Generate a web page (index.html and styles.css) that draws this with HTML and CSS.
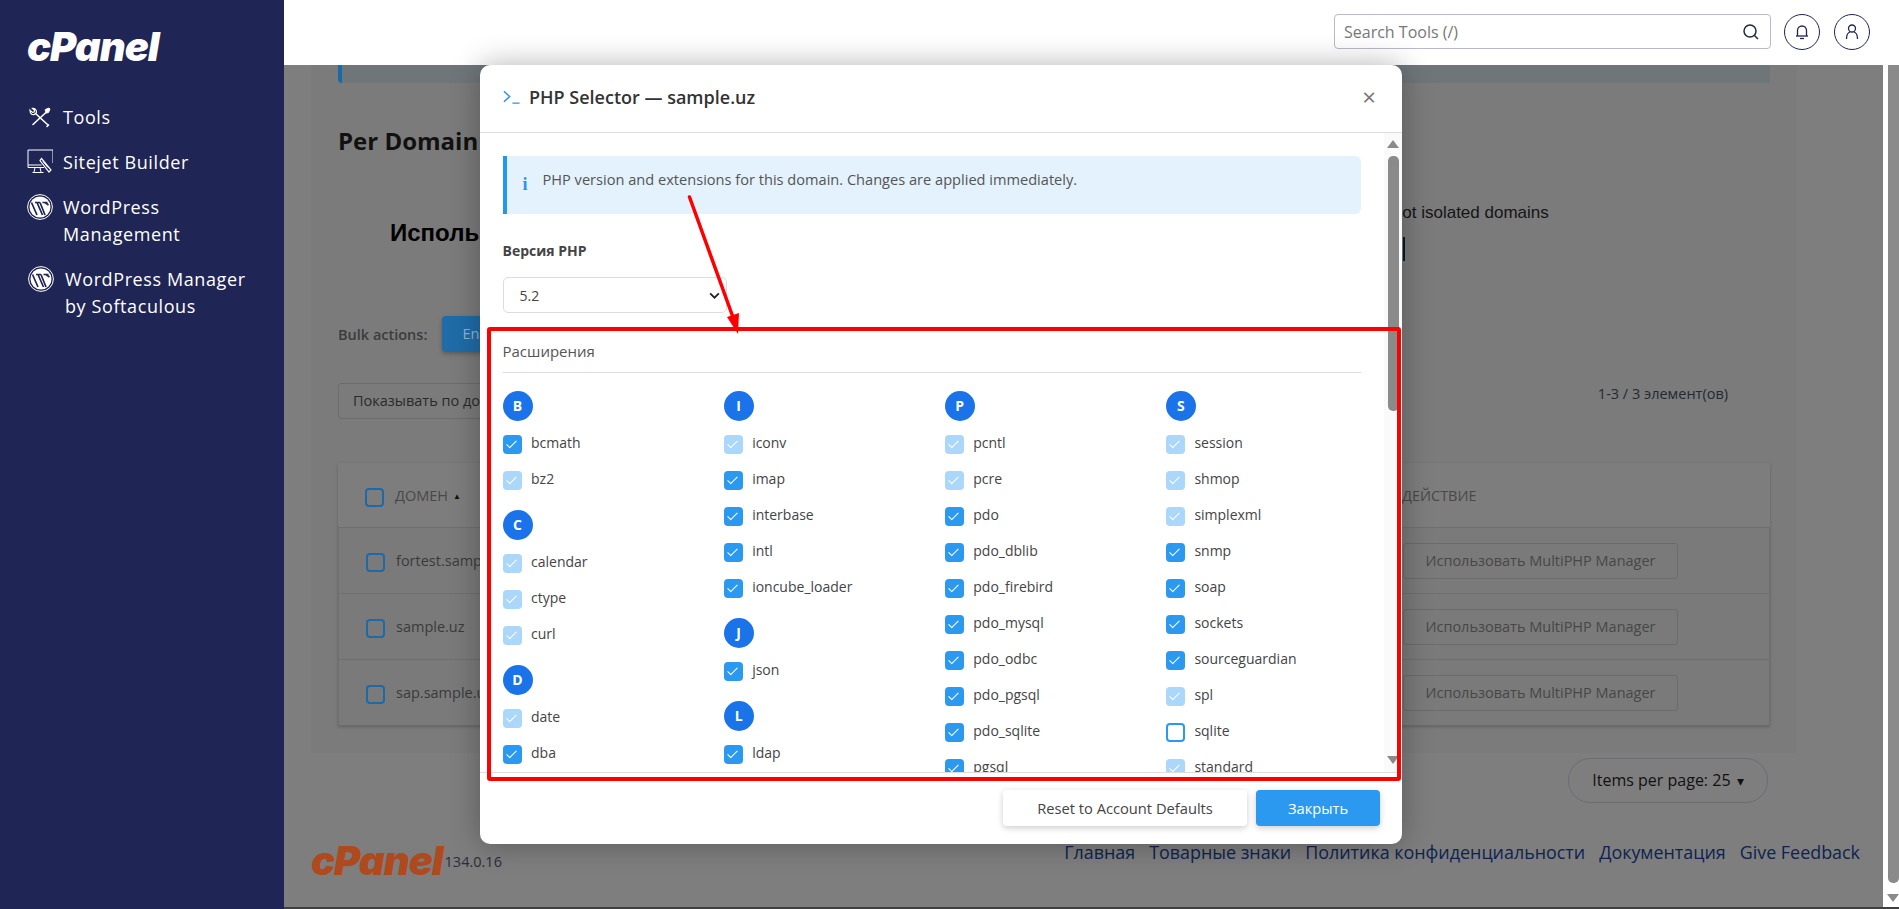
FILE: index.html
```html
<!DOCTYPE html>
<html lang="en">
<head>
    <meta charset="UTF-8">
    <meta name="viewport" content="width=device-width, initial-scale=1.0">
    <title>PHP Selector — sample.uz</title>
    <link rel="stylesheet" href="styles.css">
</head>
<body>
    <div class="app">
        <aside class="sidebar">
            <div class="logo">cPanel</div>
            <nav class="nav">
                <a class="nav-item">
                    <svg class="nav-icon" viewBox="0 0 26 24" fill="none" stroke="#fff" stroke-width="1.6" stroke-linecap="round"><path d="M6 19.5 20.5 6"/><path d="M18.5 4.5 22 3l1 1-1.5 3.5-2 .5z" fill="#fff" stroke-width="1"/><path d="M8.5 8.5 21 20"/><path d="M9.5 7.5a3.6 3.6 0 0 1-4.8 1.7L3.4 7.8 3 5.2l2.6 2.2 1.6-.4.4-1.6L5.4 3.4A3.6 3.6 0 0 1 9.5 7.5z" stroke-width="1.2"/><path d="M20 21.5l1.5-1.5"/></svg>
                    <span>Tools</span>
                </a>
                <a class="nav-item">
                    <svg class="nav-icon" viewBox="0 0 26 26" fill="none" stroke="#fff" stroke-width="1"><path d="M17 18.5H1V1h25v13"/><path d="M1 16h13.5"/><path d="M8 18.5 7 23M13 18.5l1 4.500M5.500 23.500h11"/><path d="M14.500 9.500 24 21l-2 2-9-11.500z" fill="#1f2554" stroke-width="1.200"/><path d="M16 12.500 21 18.500"/></svg>
                    <span>Sitejet Builder</span>
                </a>
                <a class="nav-item">
                    <svg class="nav-icon wp" viewBox="0 0 26 26"><circle cx="13" cy="13" r="12.400" fill="none" stroke="#fff" stroke-width="1"/><circle cx="13" cy="13" r="10.500" fill="#fff"/><path d="M4.500 8.500 10 21M8 8.500h5M10 8.500l5.500 12.500M13 8.500 18 21M15.500 8.500h5M18 8.500 21.500 11" fill="none" stroke="#1f2554" stroke-width="1.700"/></svg>
                    <span>WordPress<br>Management</span>
                </a>
                <a class="nav-item nav-item-last">
                    <svg class="nav-icon wp" viewBox="0 0 26 26"><circle cx="13" cy="13" r="12.400" fill="none" stroke="#fff" stroke-width="1"/><circle cx="13" cy="13" r="10.500" fill="#fff"/><path d="M4.500 8.500 10 21M8 8.500h5M10 8.500l5.500 12.500M13 8.500 18 21M15.500 8.500h5M18 8.500 21.500 11" fill="none" stroke="#1f2554" stroke-width="1.700"/></svg>
                    <span>WordPress Manager<br>by Softaculous</span>
                </a>
            </nav>
        </aside>

        <div class="main">
            <header class="topbar">
                <div class="search">
                    <span class="search-text">Search Tools (/)</span>
                    <svg class="search-icon" viewBox="0 0 18 18" fill="none" stroke="#1d2a3a" stroke-width="1.500"><circle cx="8" cy="8" r="6"/><path d="M12.500 12.500 16 16"/></svg>
                </div>
                <button class="round-btn">
                    <svg viewBox="0 0 18 18" fill="none" stroke="#1f2554" stroke-width="1.300"><path d="M4.500 13V7.500a4.500 4.500 0 0 1 9 0V13"/><path d="M3 13h12"/><path d="M7 15.500h4"/></svg>
                </button>
                <button class="round-btn">
                    <svg viewBox="0 0 18 18" fill="none" stroke="#1f2554" stroke-width="1.300"><circle cx="9" cy="5.500" r="3.500"/><path d="M3.500 16c0-4 2-6.500 3.500-7M14.500 16c0-4-2-6.500-3.500-7"/></svg>
                </button>
            </header>

            <div class="under">
                <div class="content">
                    <div class="panel">
                        <div class="alert"></div>
                        <h2 class="panel-title">Per Domain</h2>
                        <div class="promo">
                            <h3 class="promo-title">Используйте</h3>
                            <div class="promo-side">
                                <div>Not isolated domains</div>
                                <div class="promo-bar"></div>
                            </div>
                        </div>
                        <div class="bulk">
                            <span class="bulk-label">Bulk actions:</span>
                            <span class="bulk-btn">Enable</span>
                        </div>
                        <div class="filter">
                            <span class="filter-select">Показывать по домену</span>
                            <span class="filter-count">1-3 / 3 элемент(ов)</span>
                        </div>
                        <div class="table">
                            <div class="table-head">
                                <div class="cell-domain"><span class="bg-check"></span>ДОМЕН <small>▲</small></div>
                                <div>ДЕЙСТВИЕ</div>
                            </div>
                            <div class="table-row">
                                <div class="cell-domain"><span class="bg-check"></span>fortest.sample.uz</div>
                                <div><span class="row-btn">Использовать MultiPHP Manager</span></div>
                            </div>
                            <div class="table-row">
                                <div class="cell-domain"><span class="bg-check"></span>sample.uz</div>
                                <div><span class="row-btn">Использовать MultiPHP Manager</span></div>
                            </div>
                            <div class="table-row">
                                <div class="cell-domain"><span class="bg-check"></span>sap.sample.uz</div>
                                <div><span class="row-btn">Использовать MultiPHP Manager</span></div>
                            </div>
                        </div>
                    </div>
                    <div class="pager"><span class="pager-pill">Items per page: 25 <small>▾</small></span></div>
                    <footer class="footer">
                        <div class="footer-brand"><span class="footer-logo">cPanel</span><span>134.0.16</span></div>
                        <div class="footer-links">
                            <a>Главная</a>
                            <a>Товарные знаки</a>
                            <a>Политика конфиденциальности</a>
                            <a>Документация</a>
                            <a>Give Feedback</a>
                        </div>
                    </footer>
                </div>
                <div class="page-scroll">
                    <div class="page-thumb"></div>
                    <div class="arrow-down"></div>
                </div>
            </div>
        </div>
    </div>

    <div class="modal">
        <div class="modal-head">
            <svg class="modal-icon" viewBox="0 0 18 16" fill="none" stroke="#2b8fe8" stroke-width="1.500"><path d="M1 2 7 7.500 1 13"/><path d="M10 14.500h7.500"/></svg>
            <h4 class="modal-title">PHP Selector — sample.uz</h4>
            <span class="modal-close">×</span>
        </div>
        <div class="modal-main">
            <div class="modal-body">
                <div class="info">
                    <span class="info-icon">i</span>
                    <span>PHP version and extensions for this domain. Changes are applied immediately.</span>
                </div>
                <label class="field-label">Версия PHP</label>
                <div class="select">
                    <span>5.2</span>
                    <svg viewBox="0 0 12 8" fill="none" stroke="#222" stroke-width="2"><path d="M1 1.500 6 6.500 11 1.500"/></svg>
                </div>
                <div class="section-label">Расширения</div>
                <div class="ext-grid">
                    <div class="ext-col">
                        <div class="ext-letter">B</div>
                        <div class="ext-group">
                            <div class="ext-row"><span class="check on"></span>bcmath</div>
                            <div class="ext-row"><span class="check off"></span>bz2</div>
                        </div>
                        <div class="ext-letter">C</div>
                        <div class="ext-group">
                            <div class="ext-row"><span class="check off"></span>calendar</div>
                            <div class="ext-row"><span class="check off"></span>ctype</div>
                            <div class="ext-row"><span class="check off"></span>curl</div>
                        </div>
                        <div class="ext-letter">D</div>
                        <div class="ext-group">
                            <div class="ext-row"><span class="check off"></span>date</div>
                            <div class="ext-row"><span class="check on"></span>dba</div>
                        </div>
                    </div>
                    <div class="ext-col">
                        <div class="ext-letter">I</div>
                        <div class="ext-group">
                            <div class="ext-row"><span class="check off"></span>iconv</div>
                            <div class="ext-row"><span class="check on"></span>imap</div>
                            <div class="ext-row"><span class="check on"></span>interbase</div>
                            <div class="ext-row"><span class="check on"></span>intl</div>
                            <div class="ext-row"><span class="check on"></span>ioncube_loader</div>
                        </div>
                        <div class="ext-letter">J</div>
                        <div class="ext-group">
                            <div class="ext-row"><span class="check on"></span>json</div>
                        </div>
                        <div class="ext-letter">L</div>
                        <div class="ext-group">
                            <div class="ext-row"><span class="check on"></span>ldap</div>
                        </div>
                    </div>
                    <div class="ext-col">
                        <div class="ext-letter">P</div>
                        <div class="ext-group">
                            <div class="ext-row"><span class="check off"></span>pcntl</div>
                            <div class="ext-row"><span class="check off"></span>pcre</div>
                            <div class="ext-row"><span class="check on"></span>pdo</div>
                            <div class="ext-row"><span class="check on"></span>pdo_dblib</div>
                            <div class="ext-row"><span class="check on"></span>pdo_firebird</div>
                            <div class="ext-row"><span class="check on"></span>pdo_mysql</div>
                            <div class="ext-row"><span class="check on"></span>pdo_odbc</div>
                            <div class="ext-row"><span class="check on"></span>pdo_pgsql</div>
                            <div class="ext-row"><span class="check on"></span>pdo_sqlite</div>
                            <div class="ext-row"><span class="check on"></span>pgsql</div>
                        </div>
                    </div>
                    <div class="ext-col">
                        <div class="ext-letter">S</div>
                        <div class="ext-group">
                            <div class="ext-row"><span class="check off"></span>session</div>
                            <div class="ext-row"><span class="check off"></span>shmop</div>
                            <div class="ext-row"><span class="check off"></span>simplexml</div>
                            <div class="ext-row"><span class="check on"></span>snmp</div>
                            <div class="ext-row"><span class="check on"></span>soap</div>
                            <div class="ext-row"><span class="check on"></span>sockets</div>
                            <div class="ext-row"><span class="check on"></span>sourceguardian</div>
                            <div class="ext-row"><span class="check off"></span>spl</div>
                            <div class="ext-row"><span class="check none"></span>sqlite</div>
                            <div class="ext-row"><span class="check off"></span>standard</div>
                        </div>
                    </div>
                </div>
            </div>
            <div class="modal-scroll">
                <div class="arrow-up"></div>
                <div class="modal-thumb"></div>
                <div class="arrow-down"></div>
            </div>
        </div>
        <div class="modal-foot">
            <button class="btn-reset">Reset to Account Defaults</button>
            <button class="btn-close">Закрыть</button>
        </div>
    </div>

    <!-- red annotation drawn over the screenshot -->
    <svg class="annotation" viewBox="0 0 1899 909" fill="none">
        <rect x="489" y="329" width="910" height="450" stroke="#f00" stroke-width="4" rx="1"/>
        <path d="M689.500 197 734 320" stroke="#f00" stroke-width="3.500" stroke-linecap="round"/>
        <path d="M738 334 727 317 739 313z" fill="#f00"/>
    </svg>
</body>
</html>
```

FILE: styles.css
```css
html, body {
    margin: 0;
    height: 100%;
    overflow: hidden;
}
body {
    font-family: "Open Sans", Arial, sans-serif;
    font-size: 14px;
    color: #444;
}
h2, h3, h4 {
    margin: 0;
}
.app {
    display: flex;
    height: 100vh;
}

/* sidebar */
.sidebar {
    width: 284px;
    flex: none;
    background-color: #1f2554;
    color: #fff;
    box-sizing: border-box;
    padding-left: 27px;
}
.logo {
    height: 104px;
    padding-top: 24px;
    box-sizing: border-box;
    font-family: Inter, sans-serif;
    font-size: 40px;
    line-height: 46px;
    font-weight: 900;
    font-style: italic;
    letter-spacing: -1px;
}
.nav {
    display: flex;
    flex-direction: column;
    gap: 18px;
}
.nav-item {
    display: flex;
    align-items: flex-start;
    gap: 10px;
    font-size: 18px;
    line-height: 27px;
    letter-spacing: 0.6px;
}
.nav-item-last {
    margin-left: 1px;
    gap: 11px;
}
.nav-icon {
    width: 26px;
    height: 26px;
    flex: none;
}

/* top bar */
.main {
    flex: 1;
    min-width: 0;
    display: flex;
    flex-direction: column;
}
.topbar {
    height: 65px;
    flex: none;
    background: #fff;
    display: flex;
    align-items: center;
    justify-content: flex-end;
    gap: 14px;
    padding-right: 29px;
    padding-bottom: 2px;
    box-sizing: border-box;
}
.search {
    width: 437px;
    height: 35px;
    margin-right: -1px;
    box-sizing: border-box;
    border: 1px solid #b9b9c9;
    border-radius: 4px;
    display: flex;
    align-items: center;
    justify-content: space-between;
    padding: 0 10px 0 9px;
    font-size: 16px;
    color: #777;
}
.search-icon {
    width: 18px;
    height: 18px;
}
.round-btn {
    width: 36px;
    height: 36px;
    border: 1px solid #1f2554;
    border-radius: 50%;
    background: #fff;
    padding: 8px;
    box-sizing: border-box;
    margin-left: 0;
}
.round-btn svg {
    display: block;
    width: 18px;
    height: 18px;
}

/* dimmed page behind the modal */
.under {
    flex: 1;
    min-height: 0;
    display: flex;
    border-bottom: 2px solid #3f3f3f;
}
.content {
    flex: 1;
    min-width: 0;
    background-color: #7e7e7e;
    color: #3a3a3a;
    font-size: 14.500px;
}
.panel {
    margin: 0 86px 0 27px;
    padding: 0 27px 27px;
    background-color: #7b7b7b;
}
.alert {
    height: 18px;
    background-color: #6f767a;
    border-left: 4px solid #1a6aa5;
    border-radius: 0 0 0 4px;
}
.panel-title {
    margin-top: 43px;
    font-size: 24px;
    line-height: 30px;
    font-weight: 700;
    color: #111;
}
.promo {
    display: grid;
    grid-template-columns: 1052px 1fr;
    height: 160px;
    font-family: "Liberation Sans", Arial, sans-serif;
}
.promo-title {
    padding: 62px 0 0 52px;
    font-size: 24px;
    line-height: 30px;
    color: #000;
}
.promo-side {
    padding-top: 46px;
    font-size: 17px;
    line-height: 22px;
    color: #151515;
}
.promo-bar {
    width: 2px;
    height: 24px;
    margin: 13px 0 0 13px;
    background-color: #0a1a2a;
}
.bulk {
    display: flex;
    align-items: center;
    gap: 15px;
    height: 36px;
}
.bulk-label {
    font-weight: 600;
    color: #3c3c3c;
}
.bulk-btn {
    width: 140px;
    height: 36px;
    line-height: 36px;
    padding-left: 20px;
    box-sizing: border-box;
    background-color: #1f6ca8;
    border-radius: 4px;
    color: #8fb4cf;
    box-shadow: 0 2px 4px rgba(0, 0, 0, 0.25);
}
.filter {
    display: flex;
    justify-content: space-between;
    margin-top: 31px;
    height: 36px;
    padding-right: 42px;
}
.filter-select {
    width: 300px;
    box-sizing: border-box;
    padding-left: 14px;
    border: 1px solid #6c6c6c;
    border-radius: 3px;
    line-height: 34px;
    color: #2a2a2a;
}
.filter-count {
    line-height: 22px;
    color: #222a33;
}
.table {
    margin-top: 44px;
    border-right: 1px solid #6f6f6f;
    border-left: 1px solid #6f6f6f;
    border-bottom: 1px solid #6a6a6a;
    box-shadow: 0 1px 3px rgba(0, 0, 0, 0.2);
}
.table-head,
.table-row {
    display: grid;
    grid-template-columns: 1064px 1fr;
    align-items: center;
}
.table-head {
    height: 64px;
    margin: 0 -1px;
    background-color: #7d7d7d;
    color: #484848;
}
.table-row {
    height: 66px;
    background-color: #7a7a7a;
    border-top: 1px solid #6f6f6f;
    box-sizing: border-box;
}
.cell-domain {
    display: flex;
    align-items: center;
    gap: 11px;
    padding-left: 27px;
    color: #3a3a3a;
}
.table-head .cell-domain {
    color: #484848;
}
.table-head small {
    font-size: 8px;
    margin-left: -6px;
    color: #111;
}
.bg-check {
    width: 19px;
    height: 19px;
    margin-top: 4px;
    box-sizing: border-box;
    border: 2px solid #1d6aa6;
    border-radius: 4px;
}
.row-btn {
    display: inline-block;
    width: 275px;
    height: 36px;
    line-height: 34px;
    text-align: center;
    box-sizing: border-box;
    border: 1px solid #6b6b6b;
    border-radius: 3px;
    color: #474747;
}
.pager {
    display: flex;
    justify-content: flex-end;
    margin: 5px 115px 0 0;
}
.pager-pill {
    width: 200px;
    height: 45px;
    line-height: 43px;
    text-align: center;
    box-sizing: border-box;
    border: 1px solid #6c6c78;
    border-radius: 22px;
    font-size: 16px;
    color: #111;
}
.pager-pill small {
    font-size: 14px;
    margin-left: 2px;
}
.footer {
    display: flex;
    justify-content: space-between;
    padding: 37px 23px 0 27px;
}
.footer-brand {
    display: flex;
    align-items: center;
    gap: 2px;
    color: #2a2f38;
    margin-top: -1px;
}
.footer-logo {
    font-family: Inter, sans-serif;
    font-size: 40px;
    line-height: 44px;
    font-weight: 900;
    font-style: italic;
    letter-spacing: -1px;
    color: #ae4a1e;
}
.footer-links {
    display: flex;
    gap: 14px;
    font-size: 17.900px;
    line-height: 24px;
    color: #0d2350;
}
.page-scroll {
    width: 16px;
    flex: none;
    display: flex;
    flex-direction: column;
    align-items: flex-end;
    background: #fff;
}
.page-thumb {
    width: 11px;
    height: 818px;
    background-color: #8a8a8a;
    border-radius: 0 0 5px 5px;
}
.page-scroll .arrow-down {
    margin: 11px 0 0;
}

/* modal */
.modal {
    position: absolute;
    left: 480px;
    top: 65px;
    width: 922px;
    height: 779px;
    display: flex;
    flex-direction: column;
    background: #fff;
    border-radius: 10px;
    box-shadow: 0 0 30px rgba(0, 0, 0, 0.3);
    overflow: hidden;
}
.modal-head {
    height: 68px;
    flex: none;
    box-sizing: border-box;
    display: flex;
    align-items: center;
    padding: 0 26px 3px 23px;
    border-bottom: 1px solid #ddd;
}
.modal-icon {
    width: 17px;
    height: 16px;
    margin-right: 9px;
}
.modal-title {
    flex: 1;
    font-size: 18px;
    line-height: 24px;
    font-weight: 600;
    color: #333;
}
.modal-close {
    font-size: 24px;
    line-height: 24px;
    color: #777;
}
.modal-main {
    flex: 1;
    min-height: 0;
    display: flex;
}
.modal-body {
    flex: 1;
    min-width: 0;
    overflow: hidden;
    padding: 23px 23px 0 22.500px;
}
.info {
    height: 58px;
    box-sizing: border-box;
    display: flex;
    gap: 15px;
    padding: 13px 0 0 16px;
    background-color: #e3f2fd;
    border-left: 4px solid #2196f3;
    border-radius: 0 6px 6px 0;
    font-size: 14.600px;
    line-height: 20px;
    color: #555;
}
.info-icon {
    margin-top: 5px;
    font-family: "Liberation Serif", serif;
    font-size: 18px;
    font-weight: 700;
    color: #2196f3;
}
.field-label {
    display: block;
    margin-top: 27px;
    line-height: 20px;
    font-weight: 700;
    color: #444;
}
.select {
    width: 224px;
    height: 36px;
    margin-top: 16px;
    box-sizing: border-box;
    display: flex;
    align-items: center;
    justify-content: space-between;
    padding: 0 6px 0 16px;
    border: 1px solid #ddd;
    border-radius: 5px;
    color: #444;
}
.select svg {
    width: 11px;
    height: 7px;
}
.section-label {
    margin-top: 28px;
    padding-bottom: 11px;
    font-size: 15px;
    line-height: 20px;
    color: #555;
    border-bottom: 1px solid #ddd;
}
.ext-grid {
    display: grid;
    grid-template-columns: repeat(4, 1fr);
    column-gap: 26px;
    margin-top: 18px;
}
.ext-letter {
    width: 30px;
    height: 30px;
    border-radius: 50%;
    background-color: #1a73e8;
    color: #fff;
    font-weight: 700;
    text-align: center;
    line-height: 30px;
}
.ext-group {
    margin: 5px 0 12px;
}
.ext-row {
    height: 36px;
    display: flex;
    align-items: flex-start;
    gap: 9.500px;
    padding-top: 7px;
    box-sizing: border-box;
    line-height: 20px;
    color: #444;
}
.check {
    position: relative;
    width: 19px;
    height: 19px;
    margin-top: 2px;
    box-sizing: border-box;
    border-radius: 4px;
    background-color: #2b99f0;
}
.check.off {
    background-color: #aad7fa;
}
.check.none {
    background: #fff;
    border: 2px solid #2b99f0;
}
.check.on::after,
.check.off::after {
    content: "";
    position: absolute;
    left: 6.500px;
    top: 3px;
    width: 5px;
    height: 10px;
    box-sizing: border-box;
    border-right: 1.500px solid #fff;
    border-bottom: 1.500px solid #fff;
    transform: rotate(45deg);
}
.modal-scroll {
    width: 18px;
    flex: none;
    display: flex;
    flex-direction: column;
    align-items: center;
    padding: 7px 0 8px 0;
    box-sizing: border-box;
    background-color: #fafafa;
}
.modal-thumb {
    width: 11px;
    height: 255px;
    margin-top: 8px;
    background-color: #8a8a8a;
    border-radius: 5px;
}
.modal-scroll .arrow-down {
    margin-top: auto;
}
.arrow-up,
.arrow-down {
    width: 0;
    height: 0;
    border-left: 6px solid transparent;
    border-right: 6px solid transparent;
}
.arrow-up {
    border-bottom: 8px solid #8a8a8a;
}
.arrow-down {
    border-top: 8px solid #8a8a8a;
}
.modal-foot {
    height: 72px;
    flex: none;
    box-sizing: border-box;
    display: flex;
    justify-content: flex-end;
    gap: 9px;
    padding: 17px 22px 0 0;
    border-top: 1px solid #ddd;
}
.btn-reset,
.btn-close {
    height: 36px;
    border: none;
    border-radius: 4px;
    font-family: inherit;
    font-size: 14.700px;
    box-shadow: 0 2px 6px rgba(0, 0, 0, 0.2);
}
.btn-reset {
    width: 244px;
    background: #fff;
    color: #444;
}
.btn-close {
    width: 124px;
    background-color: #2b99f0;
    color: #fff;
}
.annotation {
    position: absolute;
    left: 0;
    top: 0;
    width: 1899px;
    height: 909px;
    pointer-events: none;
}
```
